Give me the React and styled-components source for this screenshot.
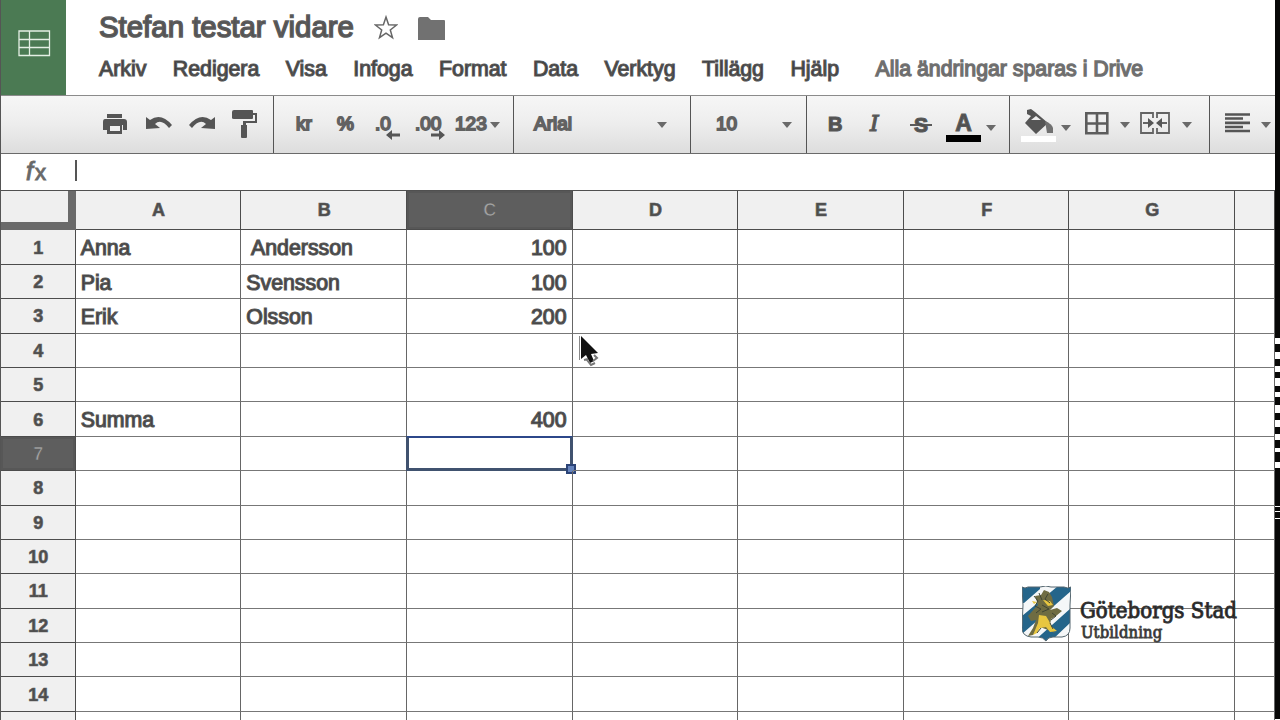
import styled, { createGlobalStyle, css } from "styled-components";

const GlobalStyle = createGlobalStyle`
  * { box-sizing: border-box; }
  body {
    margin: 0;
    background: #fff;
    font-family: "Liberation Sans", Arial, sans-serif;
    overflow: hidden;
  }
`;

const Page = styled.div`
  position: relative;
  display: flex;
  width: 1280px;
  height: 720px;
  overflow: hidden;
`;

const Sheet = styled.div`
  width: 1275px;
  height: 720px;
  overflow: hidden;
  border-left: 1px solid #555;
`;

const Edge = styled.div`
  width: 5px;
  display: flex;
  flex-direction: column;
  background: #fff;
`;

const EdgePart = styled.div`
  flex: none;
  height: ${(p) => p.$h}px;
  margin-top: ${(p) => p.$gap || 0}px;
  background: #080807;
`;

const Header = styled.header`
  display: flex;
  height: 95px;
`;

const HomeButton = styled.div`
  display: flex;
  width: 65px;
  height: 95px;
  padding: 30px 0 0 17px;
  background: #4b7a53;
`;

const Titles = styled.div`
  padding-left: 33px;
`;

const TitleRow = styled.div`
  display: flex;
  height: 56px;
  padding-top: 10px;
`;

const Title = styled.div`
  width: 275px;
  font-size: 29.4px;
  line-height: 34px;
  white-space: nowrap;
  color: #4f4f4f;
  -webkit-text-stroke: 1.5px #5c5c5c;
`;

const MenuRow = styled.nav`
  display: flex;
  gap: 26.5px;
  font-size: 21.3px;
  line-height: 26px;
  color: #333;
  -webkit-text-stroke: 1.2px #565656;
`;

const MenuItem = styled.span`
  white-space: nowrap;
`;

const Status = styled(MenuItem)`
  margin-left: 10px;
  color: #6b6b6b;
  -webkit-text-stroke: 1.3px #707070;
`;

const Toolbar = styled.div`
  display: flex;
  height: 59px;
  border-top: 1px solid #8b8b8b;
  border-bottom: 1px solid #6a6a6a;
  background: linear-gradient(#f6f6f6, #ededed 50%, #dddddd);
`;

const Group = styled.div`
  display: flex;
  flex: none;
  width: ${(p) => p.$w}px;
  border-right: 1px solid #555;
`;

const Tool = styled.div`
  flex: none;
  width: ${(p) => p.$w}px;
  margin-left: ${(p) => p.$gap}px;
  padding-top: ${(p) => p.$top || 0}px;
  font-size: 19px;
  line-height: 56px;
  color: #505050;
  white-space: nowrap;
  -webkit-text-stroke: 1.8px #626262;
  svg { display: block; }
`;

const Letter = styled(Tool)`
  font-size: ${(p) => p.$size}px;
  font-weight: 700;
  -webkit-text-stroke: 1.2px #5a5a5a;
`;

const Italic = styled(Letter)`
  font-family: "DejaVu Serif", serif;
  font-style: italic;
  font-weight: 400;
`;

const Strike = styled(Letter)`
  display: flex;
  justify-content: center;
  align-items: center;
  background: linear-gradient(#5a5a5a, #5a5a5a) 0 28px / 100% 2px no-repeat;
`;

const TextColor = styled.div`
  display: flex;
  flex: none;
  flex-direction: column;
  align-items: center;
  width: 35px;
  height: 30px;
  margin: 16px 0 0 14px;
  border-bottom: 7px solid #000;
  font-size: 23px;
  line-height: 23px;
  font-weight: 700;
  color: #505050;
  -webkit-text-stroke: 1px #5a5a5a;
`;

const Arrow = styled.div`
  flex: none;
  width: 0;
  height: 0;
  margin: ${(p) => p.$top || 26}px 0 0 ${(p) => p.$gap}px;
  border: 5px solid transparent;
  border-top: 6px solid #6a6a6a;
  border-bottom: 0;
`;

const FormulaBar = styled.div`
  display: flex;
  height: 36px;
`;

const Fx = styled.div`
  width: 74px;
  padding-left: 25px;
  font-size: 25px;
  line-height: 35px;
  font-style: italic;
  color: #666;
  -webkit-text-stroke: 1px #6c6c6c;
  span { font-size: 22px; font-style: normal; margin-left: 2px; }
`;

const Caret = styled.div`
  width: 2px;
  height: 21px;
  margin-top: 6px;
  background: #555;
`;

const Grid = styled.div`
  display: grid;
  grid-template-columns: 74.7px repeat(7, 165.63px) 40px;
  grid-template-rows: 39.4px repeat(15, 34.4px);
  border-top: 1px solid #505050;
`;

const Corner = styled.div`
  border-right: 8px solid #6a6a6a;
  border-bottom: 8px solid #6a6a6a;
  background: #efefef;
`;

const HeadCell = styled.div`
  display: flex;
  align-items: center;
  justify-content: center;
  padding: ${(p) => (p.$row ? "2px 0 0 1px" : "0 0 0 1px")};
  border-right: 1px solid #4c4c4c;
  border-bottom: 1px solid #4c4c4c;
  background: #f0f0f0;
  font-size: 18px;
  font-weight: 700;
  color: #4c4c4c;
  -webkit-text-stroke: 0.7px #5e5e5e;
  ${(p) => p.$active && css`
    background: #5e5e5e;
    color: #a2a2a2;
    box-shadow: inset 0 0 0 2px #575757;
  `}
`;

const Cell = styled.div`
  position: relative;
  padding: 0 5px;
  border-right: 1px solid #666;
  border-bottom: 1px solid #777;
  font-size: 21.3px;
  line-height: 36px;
  text-align: ${(p) => (p.$num ? "right" : "left")};
  white-space: pre;
  color: #383838;
  -webkit-text-stroke: 1.2px #555;
`;

const Selection = styled.div`
  position: absolute;
  top: -1px;
  left: -1px;
  right: -1px;
  bottom: -1px;
  border: 3px solid #40526f;
  border-top: 2px solid #2c478a;
`;

const Handle = styled.div`
  position: absolute;
  right: -6px;
  bottom: -6px;
  width: 10px;
  height: 10px;
  border: 2px solid #2c4478;
  background: #6684bd;
`;

const Pointer = styled.svg`
  position: absolute;
  left: 576px;
  top: 334px;
`;

const Brand = styled.div`
  position: absolute;
  left: 1022px;
  top: 586px;
  display: flex;
`;

const BrandText = styled.div`
  margin: 12px 0 0 9px;
  font-family: "DejaVu Serif Condensed", "DejaVu Serif", serif;
  font-stretch: condensed;
  color: #222;
  white-space: nowrap;
`;

const BrandName = styled.div`
  font-size: 22px;
  line-height: 25px;
  letter-spacing: 0.03px;
  -webkit-text-stroke: 0.9px #333;
`;

const BrandUnit = styled.div`
  font-size: 16.5px;
  line-height: 20px;
  letter-spacing: 0.1px;
  padding-left: 1px;
  -webkit-text-stroke: 0.8px #444;
`;

const menu = ["Arkiv", "Redigera", "Visa", "Infoga", "Format", "Data", "Verktyg", "Tillägg", "Hjälp"];
const columns = ["A", "B", "C", "D", "E", "F", "G", ""];
const rows = Array.from({ length: 15 }, (_, i) => i + 1);
const data = {
  A1: "Anna", B1: " Andersson", C1: "100",
  A2: "Pia", B2: "Svensson", C2: "100",
  A3: "Erik", B3: "Olsson", C3: "200",
  A6: "Summa", C6: "400",
};

// [height, gap above]
const edgeParts = [
  [338, 0], [8, 6], [7, 7], [6, 6], [6, 8], [8, 5], [7, 8], [7, 7], [8, 6], [10, 4], [38, 6], [4, 1], [6, 1], [200, 1],
];

const PrintIcon = () => (
  <svg width="26" height="22" viewBox="0 0 26 22" fill="#555">
    <path d="M5 0h15v4H5zM3 5h19q3 0 3 3v8h-4v-5H5v5H1V8q0-3 2-3z" />
    <path d="M5 11h15v9H5z" />
    <path d="M8 12h10v5H8z" fill="#eee" />
  </svg>
);

const UndoIcon = ({ flip }) => (
  <svg width="26" height="14" viewBox="0 0 26 14" fill="#555" transform={flip ? "scale(-1 1)" : undefined}>
    <path d="M0 1l4 3Q15-4 26 9l-3 3Q15 2 9 8l5 4-14 1z" />
  </svg>
);

const PaintIcon = () => (
  <svg width="25" height="28" viewBox="0 0 25 28" fill="#555">
    <path d="M2 0h18q1 0 1 1v2h4v10H14v2h1v12q0 1-1 1h-4q-1 0-1-1V15h2v-4h12V5h-2v3q0 1-1 1H2Q0 9 0 8V2q0-2 2-2z" />
  </svg>
);

const DecimalArrow = styled.svg`
  position: absolute;
  right: ${(p) => p.$right}px;
  top: 34px;
`;

const Decimal = styled(Tool)`
  position: relative;
`;

const FillIcon = () => (
  <svg width="36" height="34" viewBox="0 0 36 34" fill="#555">
    <path d="M6 1l4-1 4 3 13 11-12 11L4 14l6-7-4-2z" />
    <path d="M10 11l5-4 5 4z" fill="#eee" />
    <path d="M24 12q7 3 8 7v5h-6q-1-6-2-12z" fill="#717171" />
    <path d="M0 27h35v6H0z" fill="#fff" />
  </svg>
);

const BorderIcon = () => (
  <svg width="24" height="23" viewBox="0 0 24 23" fill="none" stroke="#5c5c5c" strokeWidth="2.6">
    <path d="M1.300 1.300h21v20H1.300zM12 1v21M1 11.500h22" />
  </svg>
);

const MergeIcon = () => (
  <svg width="30" height="22" viewBox="0 0 30 22" fill="none" stroke="#636363" strokeWidth="1.8">
    <path d="M13 6V1H1v20h12v-5M17 6V1h12v20H17v-5M3 11h7M27 11h-7" />
    <path d="M8 6l6 5-6 5zM22 6l-6 5 6 5z" fill="#555" stroke="none" />
  </svg>
);

const AlignIcon = () => (
  <svg width="26" height="20" viewBox="0 0 26 20" stroke="#555" strokeWidth="2.7">
    <path d="M0 1.500h25M0 5.500h18M0 9.800h25M0 14h18M0 18h25" />
  </svg>
);

const shieldPath = "M0 1q3 2 6 0h12q6-2 11 0h13q4 2 7 0l-1 18v23q0 8-8 9H31q-5 0-7 4-3-4-8-4H9q-9-1-9-9l1-23z";

const Shield = () => (
  <svg width="49" height="56" viewBox="0 0 49 56">
    <clipPath id="shield">
      <path d={shieldPath} />
    </clipPath>
    <g clipPath="url(#shield)">
      <path d="M0 0h49v56H0z" fill="#f5f7f8" />
      <path d="M0 0h18v3L2 17H0zM0 30L36 0h13v5L0 48zM11 56L49 22v14L28 56zM42 56l7-8v8z" fill="#25658a" />
    </g>
    <path d="M13 10l6-1 3-5 5 2 3 5 2 9-4 4 7-2 5 3-6 5-5 3-1 7 5 7-7-3-8-3-7 8-5 1 5-8 3-8-5 1-3-5 7-8 3-3z" fill="#6f6c42" />
    <path d="M17 29l7 1 3 5 2 5 6 5-7 1-4-5-6 1-3 5-4 2 5-12zM21 14l7 1 3 4-5 1zM10 15l5 1-3 2z" fill="#e8c640" />
    <path d="M12 10l4 5-3 5 6 3-5 4M17 7l3 7M26 8l-3 5 5 4M20 19l7 4-7 3M30 27l4 3-5 4M19 42l-4 5M28 37l3 6" fill="none" stroke="#3f4535" />
    <path d={shieldPath} fill="none" stroke="#53656e" />
  </svg>
);

export default function App() {
  return (
    <Page>
      <GlobalStyle />
      <Sheet>
        <Header>
          <HomeButton>
            <svg width="33" height="27" viewBox="0 0 33 27" fill="none" stroke="#e4efe4" strokeWidth="1.3">
              <path d="M1 1h30.500v24.500H1zM11.500 1v24.500M1 9.500h30.500M1 17.500h30.500" />
            </svg>
          </HomeButton>
          <Titles>
            <TitleRow>
              <Title>Stefan testar vidare</Title>
              <svg width="24" height="34" viewBox="0 0 24 34" fill="none" stroke="#666" strokeWidth="1.5">
                <path d="M12 7l2.600 7.800 8 .2-6.300 5 2.200 7.600-6.500-4.400-6.500 4.400 2.200-7.600-6.300-5 8-.2z" />
              </svg>
              <svg width="48" height="34" viewBox="0 0 48 34" fill="#717171">
                <path d="M20 9q0-2 2-2h8l3 3h13q1 0 1 1v19H20z" />
              </svg>
            </TitleRow>
            <MenuRow>
              {menu.map((m) => <MenuItem key={m}>{m}</MenuItem>)}
              <Status>Alla ändringar sparas i Drive</Status>
            </MenuRow>
          </Titles>
        </Header>
        <Toolbar>
          <Group $w={273}>
            <Tool $gap={101} $w={26} $top={18}><PrintIcon /></Tool>
            <Tool $gap={18} $w={26} $top={20}><UndoIcon /></Tool>
            <Tool $gap={17} $w={26} $top={20}><UndoIcon flip /></Tool>
            <Tool $gap={17} $w={25} $top={14}><PaintIcon /></Tool>
          </Group>
          <Group $w={240}>
            <Tool $gap={22} $w={30}>kr</Tool>
            <Tool $gap={11} $w={20}>%</Tool>
            <Decimal $gap={18} $w={26}>
              .0
              <DecimalArrow $right={1} width="14" height="10" fill="#555"><path d="M0 5L6 0v3.500h8v3H6V10z" /></DecimalArrow>
            </Decimal>
            <Decimal $gap={14} $w={31}>
              .00
              <DecimalArrow $right={1} width="14" height="10" fill="#555"><path d="M14 5L8 0v3.500H0v3h8V10z" /></DecimalArrow>
            </Decimal>
            <Tool $gap={9} $w={32}>123</Tool>
            <Arrow $gap={3} />
          </Group>
          <Group $w={177}>
            <Tool $gap={20} $w={89}>Arial</Tool>
            <Arrow $gap={34} />
          </Group>
          <Group $w={116}>
            <Tool $gap={25} $w={41}>10</Tool>
            <Arrow $gap={25} />
          </Group>
          <Group $w={203}>
            <Letter $gap={21} $w={18} $size={20}>B</Letter>
            <Italic $gap={24} $w={18} $size={22}>I</Italic>
            <Strike $gap={22} $w={22} $size={21}>S</Strike>
            <TextColor>A</TextColor>
            <Arrow $gap={5} $top={29} />
          </Group>
          <Group $w={200}>
            <Tool $gap={11} $w={36} $top={13}><FillIcon /></Tool>
            <Arrow $gap={4} $top={29} />
            <Tool $gap={14} $w={24} $top={16}><BorderIcon /></Tool>
            <Arrow $gap={11} />
            <Tool $gap={10} $w={30} $top={16}><MergeIcon /></Tool>
            <Arrow $gap={12} />
          </Group>
          <Tool $gap={15} $w={26} $top={17}><AlignIcon /></Tool>
          <Arrow $gap={10} />
        </Toolbar>
        <FormulaBar>
          <Fx>f<span>x</span></Fx>
          <Caret />
        </FormulaBar>
        <Grid>
          <Corner />
          {columns.map((c) => <HeadCell key={c} $active={c === "C"}>{c}</HeadCell>)}
          {rows.map((r) => [
            <HeadCell key={r} $row $active={r === 7}>{r < 15 && r}</HeadCell>,
            ...columns.map((c) => (
              <Cell key={c + r} $num={c === "C"}>
                {data[c + r]}
                {c + r === "C7" && <Selection><Handle /></Selection>}
              </Cell>
            )),
          ])}
        </Grid>
      </Sheet>
      <Edge>
        {edgeParts.map(([h, gap], i) => <EdgePart key={i} $h={h} $gap={gap} />)}
      </Edge>
      <Pointer width="30" height="36" viewBox="0 0 30 36">
        <path d="M3.500 2v24" stroke="#888" />
        <path d="M5 2v23l5-4 4 8 4-2-3-7 7-1z" fill="#111" />
        <path d="M11 26l4 5 4-2M17 27l4-3-3-3M8 26l4-1" fill="none" stroke="#777" strokeWidth="2" />
      </Pointer>
      <Brand>
        <Shield />
        <BrandText>
          <BrandName>Göteborgs Stad</BrandName>
          <BrandUnit>Utbildning</BrandUnit>
        </BrandText>
      </Brand>
    </Page>
  );
}
